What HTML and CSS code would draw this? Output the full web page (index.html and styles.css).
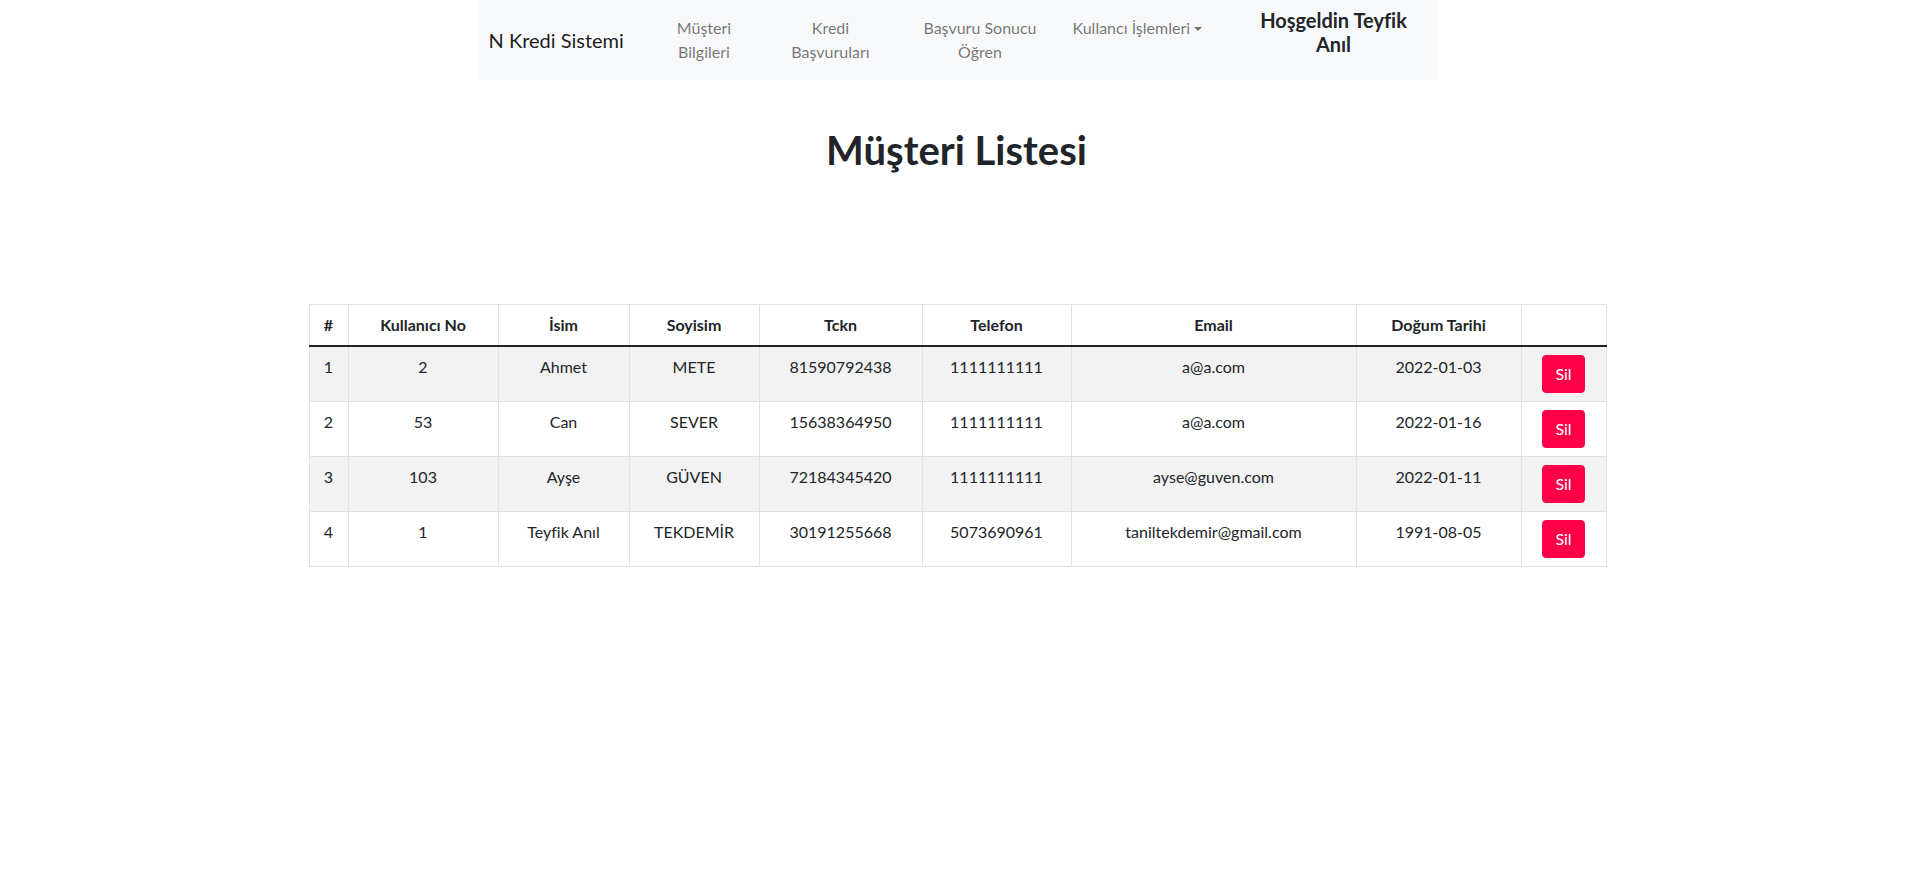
FILE: index.html
```html
<!DOCTYPE html>
<html lang="tr">
<head>
<meta charset="utf-8">
<title>Müşteri Listesi</title>
<link rel="stylesheet" href="styles.css">
</head>
<body>
<nav class="navbar">
  <div class="nav-inner">
    <a class="brand" href="#">N Kredi Sistemi</a>
    <a class="nav-link w1" href="#">Müşteri<br>Bilgileri</a>
    <a class="nav-link w2" href="#">Kredi<br>Başvuruları</a>
    <a class="nav-link w3" href="#">Başvuru Sonucu<br>Öğren</a>
    <a class="nav-link w4 dropdown" href="#">Kullancı İşlemleri<span class="caret"></span></a>
    <div class="welcome">Hoşgeldin Teyfik<br>Anıl</div>
  </div>
</nav>

<main class="container">
  <h1 class="title">Müşteri Listesi</h1>
  <table class="table">
    <thead>
      <tr>
        <th class="c-no">#</th>
        <th class="c-user">Kullanıcı No</th>
        <th class="c-name">İsim</th>
        <th class="c-surname">Soyisim</th>
        <th class="c-tckn">Tckn</th>
        <th class="c-phone">Telefon</th>
        <th class="c-email">Email</th>
        <th class="c-date">Doğum Tarihi</th>
        <th class="c-act"></th>
      </tr>
    </thead>
    <tbody>
      <tr>
        <td>1</td><td>2</td><td>Ahmet</td><td>METE</td><td>81590792438</td><td>1111111111</td><td>a@a.com</td><td>2022-01-03</td>
        <td><button class="btn-del">Sil</button></td>
      </tr>
      <tr>
        <td>2</td><td>53</td><td>Can</td><td>SEVER</td><td>15638364950</td><td>1111111111</td><td>a@a.com</td><td>2022-01-16</td>
        <td><button class="btn-del">Sil</button></td>
      </tr>
      <tr>
        <td>3</td><td>103</td><td>Ayşe</td><td>GÜVEN</td><td>72184345420</td><td>1111111111</td><td>ayse@guven.com</td><td>2022-01-11</td>
        <td><button class="btn-del">Sil</button></td>
      </tr>
      <tr>
        <td>4</td><td>1</td><td>Teyfik Anıl</td><td>TEKDEMİR</td><td>30191255668</td><td>5073690961</td><td>taniltekdemir@gmail.com</td><td>1991-08-05</td>
        <td><button class="btn-del">Sil</button></td>
      </tr>
    </tbody>
  </table>
</main>
</body>
</html>
```

FILE: styles.css
```css
* { box-sizing: border-box; }

body {
  margin: 0;
  font-family: Lato, "Noto Sans", "DejaVu Sans", sans-serif;
  font-size: 16px;
  line-height: 1.5;
  color: #212529;
  background: #fff;
}

a { text-decoration: none; }

.navbar {
  width: 960px;
  height: 80px;
  margin: 0 auto;
  background: #f8f9fa;
  padding: 8px 12px;
}

.nav-inner {
  display: flex;
  align-items: flex-start;
  height: 64px;
}

.brand {
  width: 151px;
  font-size: 20px;
  line-height: 30px;
  padding-top: 17px;
  color: rgba(0, 0, 0, 0.9);
  white-space: nowrap;
}

.nav-link {
  display: block;
  padding: 8px 0;
  color: rgba(0, 0, 0, 0.55);
  text-align: center;
  line-height: 24px;
  white-space: nowrap;
}

.w1 { width: 129px; }
.w2 { width: 124px; }
.w3 { width: 175px; }
.w4 { width: 175px; text-align: left; padding-left: 5px; }

.caret {
  display: inline-block;
  margin-left: 4px;
  vertical-align: 3px;
  border-top: 4.8px solid;
  border-left: 4.8px solid transparent;
  border-right: 4.8px solid transparent;
}

.welcome {
  width: 182px;
  text-align: center;
  font-size: 20px;
  line-height: 24px;
  font-weight: 700;
  color: #212529;
}

.container {
  width: 1320px;
  margin: 0 auto;
  padding: 0 12px;
}

.title {
  margin: 46px 0 130px;
  font-size: 40px;
  line-height: 48px;
  font-weight: 700;
  text-align: center;
}

.table {
  width: 1297px;
  border-collapse: collapse;
  table-layout: fixed;
}

.table th,
.table td {
  border: 1px solid #dee2e6;
  padding: 8px;
  text-align: center;
  line-height: 24px;
}

.table th {
  vertical-align: bottom;
  font-weight: 700;
}

.table td { vertical-align: top; }

.table tbody tr:first-child td { border-top: 2px solid #212529; }

.table tbody tr:nth-child(odd) td { background: #f2f2f2; }

.c-no { width: 39px; }
.c-user { width: 150px; }
.c-name { width: 131px; }
.c-surname { width: 130px; }
.c-tckn { width: 163px; }
.c-phone { width: 149px; }
.c-email { width: 285px; }
.c-date { width: 165px; }
.c-act { width: 85px; }

.btn-del {
  display: inline-block;
  font-family: inherit;
  font-size: 16px;
  line-height: 24px;
  padding: 6px 12px;
  border: 1px solid #ff0048;
  border-radius: 4px;
  background: #ff0048;
  color: #fff;
  cursor: pointer;
}
```
